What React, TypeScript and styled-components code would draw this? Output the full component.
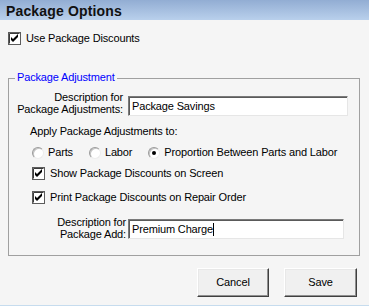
import React from "react";
import styled, { createGlobalStyle } from "styled-components";

const GlobalStyle = createGlobalStyle`
  html, body { margin: 0; padding: 0; background: #f5f5f5; }
  body { font: 11px "Liberation Sans", Arial, sans-serif; color: #000; }
`

const Window = styled.div`
  width: 369px; height: 306px;
  box-sizing: border-box;
  background: #f5f5f5;
  border-bottom: 1px solid #c6dcee;
  display: flex; flex-direction: column;
  font: 11px "Liberation Sans", Arial, sans-serif;
  line-height: 13px;
  letter-spacing: -0.15px;
  color: #000;
`

const TitleBar = styled.div`
  height: 20px;
  box-sizing: border-box;
  padding: 2px 0 0 6px;
  background: linear-gradient(#92add3, #b9d0ec);
  font: bold 14px "Liberation Sans", Arial, sans-serif;
  line-height: 18px;
  letter-spacing: 0.15px;
  color: #111;
`

const Body = styled.div`
  padding: 12px 10px 0 8px;
  display: flex; flex-direction: column;
`

const CheckRow = styled.div<{ $indent?: number, $top?: number }>`
  display: flex; align-items: center; gap: 5px;
  height: 13px;
  margin-top: ${p => p.$top ?? 0}px;
  padding-left: ${p => p.$indent ?? 0}px;
  white-space: nowrap;
`

const Group = styled.div`
  position: relative;
  margin-top: 33px;
  width: 352px; height: 178px;
  box-sizing: border-box;
  border: 1px solid #a0a0a0;
  display: flex; flex-direction: column;
`

const Legend = styled.div`
  position: absolute;
  top: -8px; left: 6px;
  padding: 0 2px;
  background: #f5f5f5;
  color: #0000ff;
  line-height: 13px;
`

const FieldRow = styled.div<{ $top: number, $labelWidth: number, $gap: number }>`
  display: flex; align-items: flex-end;
  gap: ${p => p.$gap}px;
  margin-top: ${p => p.$top}px;
  & > :first-child { width: ${p => p.$labelWidth}px; }
`

const FieldLabel = styled.div<{ $bottom?: number }>`
  text-align: right;
  line-height: 12px;
  white-space: nowrap;
  margin-bottom: ${p => p.$bottom ?? 0}px;
`

const TextBox = styled.div<{ $width: number, $bottom?: number }>`
  width: ${p => p.$width}px; height: 20px;
  box-sizing: border-box;
  margin-bottom: ${p => p.$bottom ?? 0}px;
  padding: 0 3px;
  background: #fff;
  border: 1px solid;
  border-color: #7a7a7a #e6e6e6 #e6e6e6 #7a7a7a;
  box-shadow: inset 1px 1px 0 #5a5a5a;
  display: flex; align-items: center;
  white-space: nowrap;
  line-height: 13px;
`

const Caret = styled.span`
  display: inline-block;
  width: 1px; height: 13px;
  background: #000;
`

const PlainText = styled.div<{ $top: number, $indent: number }>`
  margin-top: ${p => p.$top}px;
  padding-left: ${p => p.$indent}px;
  height: 13px;
  white-space: nowrap;
`

const RadioRow = styled.div`
  display: flex; align-items: center; gap: 16px;
  margin-top: 8px;
  padding-left: 23px;
  height: 13px;
`

const RadioItem = styled.div`
  display: flex; align-items: center; gap: 4px;
  white-space: nowrap;
`

const RadioDot = styled.span<{ $checked?: boolean }>`
  position: relative;
  width: 12px; height: 12px;
  box-sizing: border-box;
  border-radius: 50%;
  background: #fff;
  border: 1px solid;
  border-color: #9a9a9a #ececec #ececec #9a9a9a;
  box-shadow: inset 1px 1px 0 #c4c4c4;
  &::after {
    content: '';
    display: ${p => p.$checked ? 'block' : 'none'};
    position: absolute;
    left: 3px; top: 3px;
    width: 4px; height: 4px;
    border-radius: 50%;
    background: #000;
  }
`

const ButtonRow = styled.div`
  display: flex; justify-content: flex-end; gap: 15px;
  margin-top: 12px;
  padding-right: 2px;
`

const Button = styled.div<{ $width: number }>`
  width: ${p => p.$width}px; height: 29px;
  box-sizing: border-box;
  background: #f0f0f0;
  border: 1px solid;
  border-color: #ffffff #404040 #404040 #ffffff;
  box-shadow: inset -1px -1px 0 #909090, inset 1px 1px 0 #e8e8e8;
  display: flex; align-items: center; justify-content: center;
`

const CheckBox = ({ checked }: { checked: boolean }) => {
  return <svg width="13" height="13" viewBox="0 0 13 13" style={{ flex: 'none' }}>
    <rect x="0.5" y="0.5" width="12" height="12" fill="#fff" stroke="#5c5c5c"/>
    <path d="M1.5 11.5 V1.5 H11.5" fill="none" stroke="#3a3a3a"/>
    {checked && <path d="M3 5 L5 7 L10 2 L10 5 L5 10 L3 8 Z" fill="#000"/>}
  </svg>
}

type RadioProps = { label: string, checked?: boolean }
const Radio = ({ label, checked }: RadioProps) => {
  return <RadioItem>
    <RadioDot $checked={checked}/>
    <span>{label}</span>
  </RadioItem>
}

const App = () => {
  return <Window>
    <GlobalStyle/>
    <TitleBar>Package Options</TitleBar>
    <Body>
      <CheckRow>
        <CheckBox checked/>
        <span>Use Package Discounts</span>
      </CheckRow>

      <Group>
        <Legend>Package Adjustment</Legend>

        <FieldRow $top={12} $labelWidth={114} $gap={5}>
          <FieldLabel $bottom={1}>Description for<br/>Package Adjustments:</FieldLabel>
          <TextBox $width={220}>Package Savings</TextBox>
        </FieldRow>

        <PlainText $top={9} $indent={21}>Apply Package Adjustments to:</PlainText>

        <RadioRow>
          <Radio label="Parts"/>
          <Radio label="Labor"/>
          <Radio label="Proportion Between Parts and Labor" checked/>
        </RadioRow>

        <CheckRow $indent={23} $top={8}>
          <CheckBox checked/>
          <span>Show Package Discounts on Screen</span>
        </CheckRow>
        <CheckRow $indent={23} $top={11}>
          <CheckBox checked/>
          <span>Print Package Discounts on Repair Order</span>
        </CheckRow>

        <FieldRow $top={12} $labelWidth={117} $gap={2}>
          <FieldLabel>Description for<br/>Package Add:</FieldLabel>
          <TextBox $width={216} $bottom={1}>Premium Charge<Caret/></TextBox>
        </FieldRow>
      </Group>

      <ButtonRow>
        <Button $width={72}>Cancel</Button>
        <Button $width={73}>Save</Button>
      </ButtonRow>
    </Body>
  </Window>
}
export default App
